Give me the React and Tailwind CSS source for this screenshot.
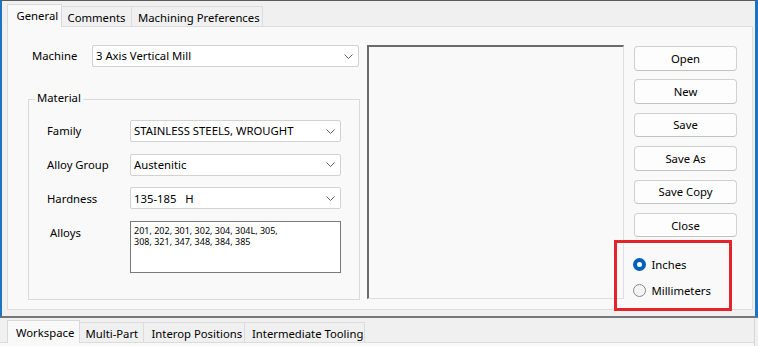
import React, { useState } from 'react';

const Chevron = () => (
  <svg width="9" height="5" viewBox="0 0 9 5" className="shrink-0">
    <path d="M0.5 0.5 L4.5 4.5 L8.5 0.5" fill="none" stroke="#5f5f5f" strokeWidth="1" />
  </svg>
);

const Combo = ({ value, width }) => (
  <div
    className={`${width} h-[22px] flex items-center justify-between bg-white border border-[#d2d2d2] rounded-[2px] pl-[3px] pr-[5px]`}
  >
    <span className="whitespace-pre">{value}</span>
    <Chevron />
  </div>
);

const Btn = ({ label }) => (
  <button className="w-[103px] h-[24.5px] bg-[#fdfdfd] border border-[#d0d0d0] border-b-[#c2c2c2] rounded-[4px] flex items-center justify-center">
    {label}
  </button>
);

const Radio = ({ label, checked, onClick }) => (
  <div className="flex items-center h-[14px] gap-[6px] -ml-[1.5px]" onClick={onClick}>
    {checked ? (
      <span className="w-[13px] h-[13px] rounded-full bg-[#005fb8] flex items-center justify-center">
        <span className="w-[5px] h-[5px] rounded-full bg-white" />
      </span>
    ) : (
      <span className="w-[13px] h-[13px] rounded-full border border-[#8a8a8a] bg-[#f4f4f4]" />
    )}
    <span>{label}</span>
  </div>
);

const FieldRow = ({ label, value }) => (
  <div className="flex items-center h-[22px]">
    <span className="w-[83px]">{label}</span>
    <Combo value={value} width="w-[211px]" />
  </div>
);

export default function App() {
  const [units, setUnits] = useState('in');

  return (
    <div className="relative w-[758px] h-[346px] bg-[#f0f0f0] overflow-hidden flex flex-col text-[11.3px] leading-none text-black font-['Noto_Sans',sans-serif]">
      {/* upper tab control */}
      <div className="h-[318px] shrink-0 flex flex-col border-t border-t-[#5a5a5a] border-l-2 border-l-[#1c73c4] border-r-[3px] border-r-[#1c73c4] border-b-2 border-b-[#767676]">
        <div className="h-[25px] flex items-end pl-[5px]">
          <div className="relative z-10 -mb-px w-[55px] h-[23px] pl-[8.5px] pt-[5px] bg-[#f9f9f9] border border-[#d9d9d9] border-b-0">
            General
          </div>
          <div className="w-[70px] h-[20px] pl-[5.5px] pt-[5px] border border-l-0 border-[#dcdcdc] border-b-0">
            Comments
          </div>
          <div className="w-[131px] h-[20px] pl-[6px] pt-[5px] border border-l-0 border-[#dcdcdc] border-b-0">
            Machining Preferences
          </div>
        </div>

        <div className="ml-[5px] w-[746px] h-[284px] bg-[#f9f9f9] border border-[#dcdcdc] flex pt-[18px] pl-[20px]">
          {/* left column */}
          <div className="w-[332px] flex flex-col">
            <div className="flex items-center h-[22px]">
              <span className="w-[64px] pl-[4px]">Machine</span>
              <Combo value="3 Axis Vertical Mill" width="w-[267px]" />
            </div>

            <div className="relative mt-[32px] h-[201px] border border-[#dadada] flex flex-col pt-[20px] pl-[18px] gap-[11.6px]">
              <span className="absolute -top-[8px] left-[6px] px-[2px] bg-[#f9f9f9]">Material</span>
              <FieldRow label="Family" value="STAINLESS STEELS, WROUGHT" />
              <FieldRow label="Alloy Group" value="Austenitic" />
              <FieldRow label="Hardness" value="135-185   H" />
              <div className="flex">
                <span className="w-[83px] pl-[3px] pt-[6px]">Alloys</span>
                <div className="w-[211px] h-[52px] bg-white border border-[#7a7a7a] pl-[3px] pt-[3px] text-[9px] leading-[11.7px]">
                  201, 202, 301, 302, 304, 304L, 305,
                  <br />
                  308, 321, 347, 348, 384, 385
                </div>
              </div>
            </div>
          </div>

          {/* preview */}
          <div className="ml-[7px] w-[257px] h-[254px] border-l-2 border-t-2 border-l-[#6b6b6b] border-t-[#6b6b6b] border-r border-b border-r-[#dedede] border-b-[#dedede]" />

          {/* buttons */}
          <div className="ml-[10px] pt-[1px] flex flex-col gap-[8.9px]">
            <Btn label="Open" />
            <Btn label="New" />
            <Btn label="Save" />
            <Btn label="Save As" />
            <Btn label="Save Copy" />
            <Btn label="Close" />
            <div className="mt-[11px] flex flex-col gap-[12px]">
              <Radio label="Inches" checked={units === 'in'} onClick={() => setUnits('in')} />
              <Radio label="Millimeters" checked={units === 'mm'} onClick={() => setUnits('mm')} />
            </div>
          </div>
        </div>
      </div>

      {/* lower tab control */}
      <div className="flex-1 flex flex-col border-r border-r-[#d6d6d6] mr-[3px]">
        <div className="h-[25px] flex items-end pl-[7px] border-b border-b-[#dcdcdc]">
          <div className="relative z-10 -mb-px w-[73px] h-[23px] pl-[8px] pt-[6px] bg-[#f9f9f9] border border-[#d9d9d9] border-b-0">
            Workspace
          </div>
          <div className="w-[64px] h-[20px] pl-[5.5px] pt-[5px] border border-l-0 border-[#dcdcdc] border-b-0">
            Multi-Part
          </div>
          <div className="w-[101px] h-[20px] pl-[7.5px] pt-[5px] border border-l-0 border-[#dcdcdc] border-b-0">
            Interop Positions
          </div>
          <div className="w-[120px] h-[20px] pl-[7px] pt-[5px] border border-l-0 border-[#dcdcdc] border-b-0">
            Intermediate Tooling
          </div>
        </div>
        <div className="flex-1 bg-[#f9f9f9]" />
      </div>

      {/* red annotation box */}
      <div className="absolute left-[614px] top-[240px] w-[118px] h-[71px] border-[3px] border-[#e3242b]" />
    </div>
  );
}
